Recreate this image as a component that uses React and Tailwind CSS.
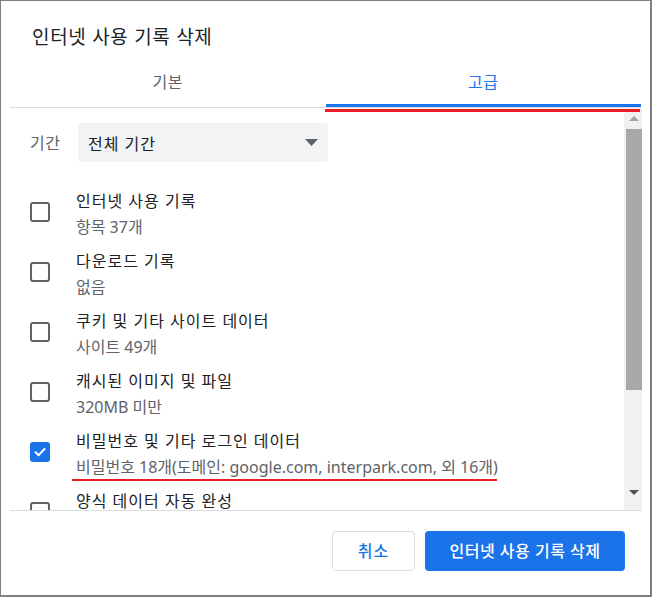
import React from 'react';

const font = { fontFamily: '"Noto Sans", "Noto Sans CJK KR", sans-serif' };

const items = [
  { title: '인터넷 사용 기록', sub: '항목 37개', checked: false },
  { title: '다운로드 기록', sub: '없음', checked: false },
  { title: '쿠키 및 기타 사이트 데이터', sub: '사이트 49개', checked: false },
  { title: '캐시된 이미지 및 파일', sub: '320MB 미만', checked: false },
  {
    title: '비밀번호 및 기타 로그인 데이터',
    sub: '비밀번호 18개(도메인: google.com, interpark.com, 외 16개)',
    checked: true,
    marked: true,
  },
  { title: '양식 데이터 자동 완성', sub: '', checked: false },
];

const Checkbox = ({ checked }) =>
  checked ? (
    <div className="w-[20px] h-[20px] rounded-[3px] bg-[#1a73e8] flex items-center justify-center shrink-0">
      <svg width="14" height="14" viewBox="0 0 14 14" fill="none">
        <path d="M2.5 7.2 L5.6 10.2 L11.5 4" stroke="white" strokeWidth="2" strokeLinecap="round" strokeLinejoin="round" />
      </svg>
    </div>
  ) : (
    <div className="w-[20px] h-[20px] rounded-[3px] border-2 border-[#5f6368] shrink-0" />
  );

const Row = ({ item }) => (
  <div className="relative h-[60px] flex items-center pl-[20px] gap-[26px] shrink-0">
    <Checkbox checked={item.checked} />
    <div className="relative top-[2px] flex flex-col text-[16px] leading-[26px]">
      <span className="text-[#202124] tracking-[1px]">{item.title}</span>
      <span className="text-[#5f6368]">{item.sub || '\u00a0'}</span>
    </div>
    {item.marked && <div className="absolute top-[57px] left-[62px] w-[425px] h-[2px] bg-[#ee1c25]" />}
  </div>
);

export default function App() {
  return (
    <div
      className="relative w-[652px] h-[597px] bg-white border-l border-t border-r-2 border-b-2 border-[#808080] flex flex-col overflow-hidden"
      style={font}
    >
      <div className="pl-[31px] pt-[24px] h-[56px] text-[19px] leading-[24px] tracking-[0.7px] text-[#202124]">
        인터넷 사용 기록 삭제
      </div>

      <div className="mx-[9px] flex h-[51px] border-b border-[#dadce0] text-[16px]">
        <div className="flex-1 flex items-center justify-center text-[#5f6368] tracking-[0.5px]">기본</div>
        <div className="relative flex-1 flex items-center justify-center text-[#1a73e8] tracking-[0.5px]">
          고급
          <div className="absolute left-0 right-0 bottom-0 h-[3px] bg-[#1a73e8]" />
        </div>
      </div>

      <div className="ml-[9px] mr-[8px] h-[402px] flex">
        <div className="flex-1 overflow-hidden flex flex-col">
          <div className="pt-[15px] pl-[20px] flex items-center gap-[17px]">
            <span className="text-[16px] text-[#5f6368] w-[31px] tracking-[0.5px]">기간</span>
            <div className="w-[250px] h-[39px] rounded-[4px] bg-[#f1f3f4] flex items-center justify-between pl-[10px] pr-[10px]">
              <span className="relative top-[1px] text-[16px] text-[#202124] tracking-[1px]">전체 기간</span>
              <svg width="13" height="7" viewBox="0 0 13 7">
                <path d="M0 0 L13 0 L6.5 7 Z" fill="#5f6368" />
              </svg>
            </div>
          </div>
          <div className="mt-[5px] ml-[19px] w-[299px] h-[3px] bg-[#3d44c4]" />
          <div className="mt-[15px] flex flex-col">
            {items.map((item) => (
              <Row key={item.title} item={item} />
            ))}
          </div>
        </div>

        <div className="w-[18px] bg-[#f1f1f1] flex flex-col items-center">
          <div className="h-[20px] flex items-center justify-center pl-[2px]">
            <svg width="10" height="5" viewBox="0 0 10 5">
              <path d="M0 5 L10 5 L5 0 Z" fill="#a3a3a3" />
            </svg>
          </div>
          <div className="mt-[1px] ml-[2px] w-[16px] h-[261px] bg-[#a8a8a8]" />
          <div className="flex-1" />
          <div className="h-[22px] flex items-start justify-center pl-[2px] pt-[2px]">
            <svg width="10" height="5" viewBox="0 0 10 5">
              <path d="M0 0 L10 0 L5 5 Z" fill="#505050" />
            </svg>
          </div>
        </div>
      </div>

      <div className="ml-[9px] mr-[8px] h-px bg-[#dadce0]" />

      <div className="flex-1 flex justify-end items-start pt-[20px] pr-[25px] gap-[10px] text-[16px]">
        <button className="w-[83px] h-[40px] rounded-[4px] border border-[#dadce0] bg-white text-[#1a73e8] font-medium tracking-[1px]">
          취소
        </button>
        <button className="w-[200px] h-[40px] rounded-[4px] bg-[#1a73e8] text-white font-medium tracking-[0.5px]">
          인터넷 사용 기록 삭제
        </button>
      </div>

      <div className="absolute top-[108px] left-[324px] w-[315px] h-[3px] bg-[#ee1c25]" />
    </div>
  );
}
